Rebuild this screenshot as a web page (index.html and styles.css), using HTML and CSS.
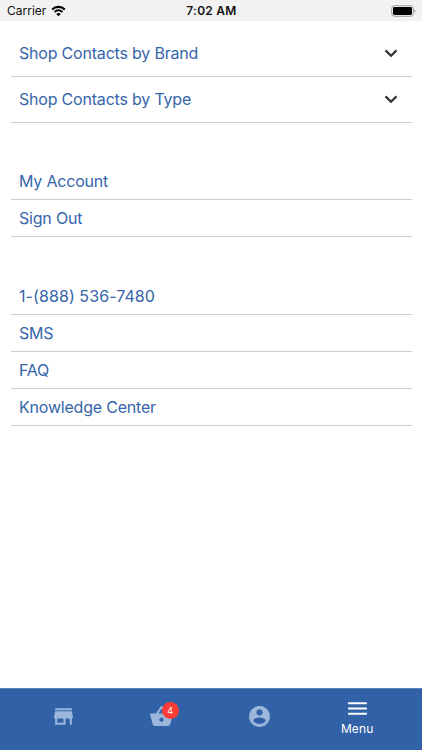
FILE: index.html
```html
<!DOCTYPE html>
<html lang="en">
<head>
<meta charset="utf-8">
<title>Menu</title>
<link rel="stylesheet" href="styles.css">
</head>
<body>
<header class="status">
  <div class="carrier">Carrier
    <svg class="wifi" viewBox="0 0 16 12"><path class="arc" d="M1.2 4.3C5 .7 11 .7 14.8 4.3M3.8 7.1C6.3 4.8 9.7 4.8 12.2 7.1"/><path d="M5.6 9.1C7 7.9 9 7.9 10.4 9.1L8 11.5z"/></svg>
  </div>
  <div class="time">7:02 AM</div>
  <div class="power"><svg class="battery" viewBox="0 0 26 12"><rect class="case" x=".7" y=".7" width="21.6" height="10.6" rx="2.8"/><rect x="2" y="2" width="19" height="8" rx="1.4"/><path class="cap" d="M23.5 4.2c1.5.6 1.5 3 0 3.6z"/></svg></div>
</header>
<main class="menu">
  <section class="group brands">
    <a class="row">Shop Contacts by Brand<svg class="chevron" viewBox="0 0 14 14"><path d="M1.5 4.4L7 9.8l5.5-5.4"/></svg></a>
    <a class="row">Shop Contacts by Type<svg class="chevron" viewBox="0 0 14 14"><path d="M1.5 4.4L7 9.8l5.5-5.4"/></svg></a>
  </section>
  <section class="group">
    <a class="row">My Account</a>
    <a class="row">Sign Out</a>
  </section>
  <section class="group">
    <a class="row phone">1-(888) 536-7480</a>
    <a class="row">SMS</a>
    <a class="row">FAQ</a>
    <a class="row">Knowledge Center</a>
  </section>
</main>
<nav class="tabs">
  <a class="tab"><svg class="icon" viewBox="0 0 24 24"><path d="M20 4H4v2h16V4zm1 10v-2l-1-5H4l-1 5v2h1v6h10v-6h4v6h2v-6h1zm-9 4H6v-4h6v4z"/></svg></a>
  <a class="tab"><svg class="icon" viewBox="0 0 24 24"><path d="M17.21 9l-4.38-6.56c-.19-.28-.51-.42-.83-.42-.32 0-.64.14-.83.43L6.79 9H2c-.55 0-1 .45-1 1 0 .09.01.18.04.27l2.54 9.27c.23.84 1 1.46 1.92 1.46h13c.92 0 1.69-.62 1.93-1.46l2.54-9.27L23 10c0-.55-.45-1-1-1h-4.79zM9 9l3-4.4L15 9H9zm3 8c-1.1 0-2-.9-2-2s.9-2 2-2 2 .9 2 2-.9 2-2 2z"/></svg><span class="badge">4</span></a>
  <a class="tab"><svg class="icon" viewBox="0 0 24 24"><path d="M12 2C6.48 2 2 6.48 2 12s4.48 10 10 10 10-4.48 10-10S17.52 2 12 2zm0 3c1.66 0 3 1.34 3 3s-1.34 3-3 3-3-1.34-3-3 1.34-3 3-3zm0 14.2c-2.5 0-4.71-1.28-6-3.22.03-1.99 4-3.08 6-3.08 1.99 0 5.97 1.09 6 3.08-1.29 1.94-3.5 3.22-6 3.22z"/></svg></a>
  <a class="tab active"><svg class="icon" viewBox="0 0 24 24"><path d="M3 18h18v-2H3v2zm0-5h18v-2H3v2zm0-7v2h18V6H3z"/></svg><span class="label">Menu</span></a>
</nav>
</body>
</html>
```
FILE: styles.css
```css
* { box-sizing: border-box; }
body {
  margin: 0;
  height: 750px;
  display: flex;
  flex-direction: column;
  overflow: hidden;
  background: #fff;
  font-family: Inter, "Liberation Sans", sans-serif;
}
.status {
  height: 21px;
  display: grid;
  grid-template-columns: 1fr auto 1fr;
  align-items: center;
  padding: 0 6px 0 7px;
  background: #f2f2f2;
  color: #111;
  font-size: 12px;
}
.carrier { display: flex; align-items: center; gap: 5px; }
.wifi { width: 15px; height: 12px; }
.arc { fill: none; stroke: #000; stroke-width: 2.2; }
.time { font-weight: 600; letter-spacing: .25px; }
.power { display: flex; justify-content: flex-end; }
.battery { width: 26px; height: 12px; margin-right: -1px; }
.case { fill: #f2f2f2; stroke: #999; stroke-width: 1; }
.cap { fill: #999; }
.menu { flex: 1; padding: 10px 10px 0 11px; }
.group { margin-bottom: 41px; }
.row {
  display: flex;
  align-items: center;
  justify-content: space-between;
  height: 37px;
  padding: 0 14px 0 8px;
  border-bottom: 1px solid #cdcfcf;
  color: #3665aa;
  font-size: 16px;
  letter-spacing: -.2px;
}
.phone { letter-spacing: .08px; }
.brands { margin-bottom: 40px; }
.brands .row { height: 46px; padding-bottom: 2px; }
.chevron { width: 14px; height: 14px; fill: none; stroke: #333; stroke-width: 2.2; }
.tabs {
  height: 62px;
  display: grid;
  grid-template-columns: repeat(4, 1fr);
  padding: 0 16px 0 15px;
  background: #3162a8;
  border-top: 1px solid #5b82bb;
}
.tab {
  position: relative;
  display: flex;
  flex-direction: column;
  align-items: center;
  padding-top: 14.5px;
  color: #9db6dc;
}
.icon { width: 25px; height: 25px; fill: currentColor; }
.active { padding-top: 7px; color: #fff; }
.label { font-size: 12px; line-height: 15px; letter-spacing: .1px; }
.badge {
  position: absolute;
  left: 50%;
  top: 13px;
  width: 17px;
  height: 17px;
  border-radius: 50%;
  background: #fc3d37;
  color: #fff;
  font-size: 9px;
  line-height: 17px;
  text-align: center;
}
```
